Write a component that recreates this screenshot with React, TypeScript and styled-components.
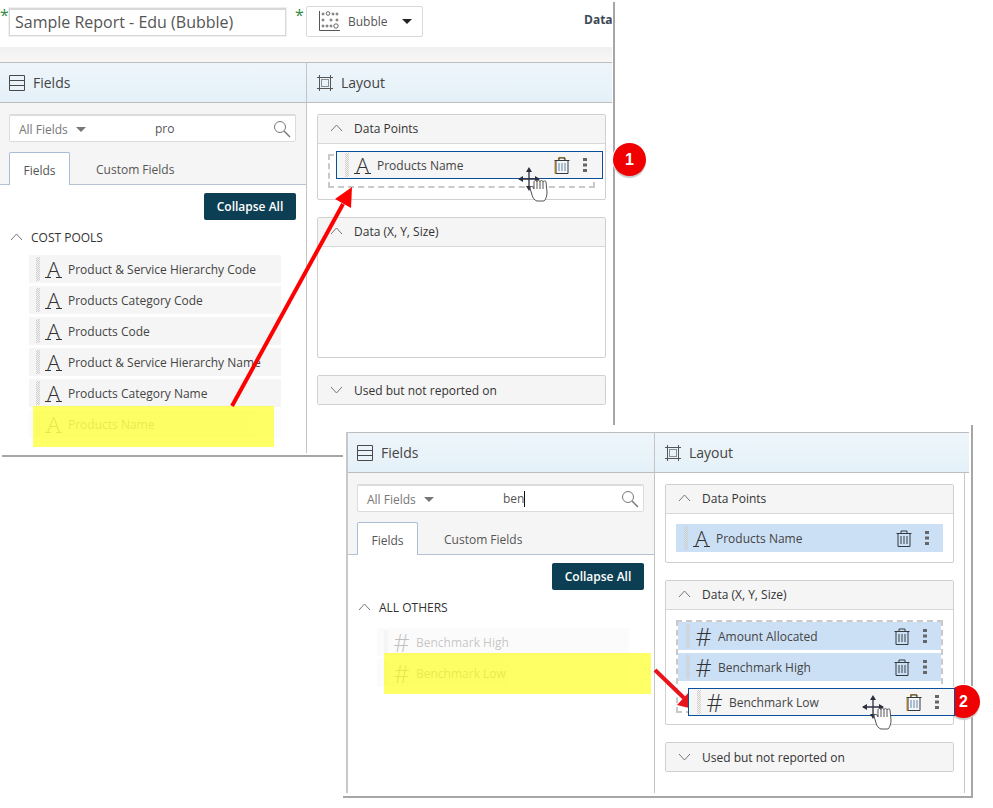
import * as React from 'react';
import styled, { createGlobalStyle } from 'styled-components';

const GlobalStyle = createGlobalStyle`
  html, body {
    margin: 0;
    padding: 0;
    background: #fff;
  }
  body {
    font-family: "Open Sans", "Liberation Sans", sans-serif;
    font-size: 12px;
    color: #444;
  }
  * {
    box-sizing: border-box;
  }
`;

const Canvas = styled.div`
  position: relative;
  width: 993px;
  height: 808px;
  overflow: hidden;
  background: #fff;
`;

const ReportWindow = styled.div`
  position: absolute;
  left: 0;
  top: 0;
  width: 615px;
  height: 458px;
  padding-right: 3px;
  background: #fff;
  &::before {
    content: '';
    position: absolute;
    right: 0;
    top: 2px;
    bottom: 0;
    width: 2px;
    background: #a6a6a6;
  }
  &::after {
    content: '';
    position: absolute;
    left: 2px;
    right: 0;
    bottom: 1px;
    height: 2px;
    background: #a6a6a6;
  }
`;

const SearchWindow = styled.div`
  position: absolute;
  left: 343px;
  top: 425px;
  width: 630px;
  height: 373px;
  padding: 7px 2px 2px 3px;
  background: #fff;
  border-right: 2px solid #a6a6a6;
  border-bottom: 2px solid #a6a6a6;
`;

const TopBar = styled.div`
  display: flex;
  align-items: flex-start;
  height: 47px;
  padding-top: 6px;
`;

const Star = styled.span<{ $w: number }>`
  width: ${p => p.$w}px;
  color: #2e8b3d;
  font-size: 16px;
  line-height: 18px;
`;

const TitleInput = styled.div`
  width: 277px;
  height: 28px;
  margin: 2px 9px 0 0;
  padding-left: 5px;
  border: 1px solid #d8d8d8;
  border-top-width: 2px;
  box-shadow: 0 0 0 1px #f0f0f0;
  color: #555;
  font-size: 16px;
  line-height: 24px;
  white-space: nowrap;
`;

const ChartSelect = styled.div`
  display: flex;
  align-items: center;
  width: 117px;
  height: 31px;
  padding-left: 12px;
  border: 1px solid #d9d9d9;
  border-radius: 2px;
  color: #555;
`;

const ChartLabel = styled.span`
  margin: 0 14px 0 8px;
  line-height: 28px;
`;

const Caret = styled.span<{ $color: string }>`
  width: 0;
  height: 0;
  border-left: 5px solid transparent;
  border-right: 5px solid transparent;
  border-top: 5px solid ${p => p.$color};
`;

const DataLabel = styled.div`
  margin-left: auto;
  width: 28px;
  overflow: hidden;
  color: #3d4a55;
  font-weight: 700;
  line-height: 28px;
`;

const Band = styled.div`
  height: 15px;
  background: linear-gradient(#f0f0f0, #f8f7f6);
`;

const Panes = styled.div<{ $h: number; $framed?: boolean }>`
  display: grid;
  grid-template-columns: 307px 1fr;
  height: ${p => p.$h}px;
  ${p => p.$framed && 'border-left: 2px solid #c8c8c8;'}
`;

const Pane = styled.div<{ $divider?: boolean }>`
  display: flex;
  flex-direction: column;
  min-width: 0;
  ${p => p.$divider && 'border-right: 1px solid #c4c4c4;'}
`;

const PaneHead = styled.div<{ $inset: number }>`
  display: flex;
  align-items: center;
  gap: 8px;
  height: 41px;
  flex: none;
  padding-left: ${p => p.$inset}px;
  border-top: 1px solid #bdbdbd;
  border-bottom: 1px solid #bdbdbd;
  background: linear-gradient(#eef6fb, #e4f0f8);
  color: #444;
  font-size: 14px;
  font-weight: 500;
`;

const SearchZone = styled.div`
  flex: none;
  height: 82px;
  padding: 11px 10px 0 9px;
  background: #f5f5f5;
`;

const SearchBox = styled.div`
  display: flex;
  align-items: center;
  height: 28px;
  padding: 1px 4px 0 9px;
  background: #fff;
  border: 1px solid #dcdcdc;
  border-top-width: 2px;
  border-radius: 2px;
  color: #555;
`;

const Scope = styled.div`
  display: flex;
  align-items: center;
  gap: 8px;
  width: 136px;
  color: #777;
`;

const SearchValue = styled.span<{ $caret?: boolean }>`
  height: 16px;
  line-height: 16px;
  ${p => p.$caret && 'border-right: 1px solid #111;'}
`;

const Magnifier = styled.svg`
  margin-left: auto;
`;

const Tabs = styled.div`
  display: flex;
  height: 33px;
  margin: 10px -10px 0 -9px;
  padding-left: 9px;
  border-bottom: 1px solid #b6c3d4;
`;

const Tab = styled.div<{ $active?: boolean }>`
  height: 33px;
  padding: 0 26px;
  line-height: 35px;
  color: #555;
  ${p => p.$active && `
    width: 61px;
    padding: 0;
    text-align: center;
    background: #fff;
    border: 1px solid #a9bdd6;
    border-bottom: 0;
    border-radius: 2px 2px 0 0;
  `}
`;

const PaneBody = styled.div`
  flex: 1;
  padding: 8px 10px 0 0;
  background: #fff;
`;

const CollapseButton = styled.div`
  width: 92px;
  height: 27px;
  margin-left: auto;
  background: #0d3f54;
  border-radius: 2px;
  color: #fff;
  font-weight: 600;
  line-height: 27px;
  text-align: center;
`;

const GroupTitle = styled.div`
  display: flex;
  align-items: center;
  gap: 8px;
  height: 18px;
  margin: 8px 0 0 10px;
  color: #333;
`;

const FieldList = styled.div<{ $top: number }>`
  display: flex;
  flex-direction: column;
  gap: 3px;
  margin: ${p => p.$top}px 0 0 29px;
  width: 252px;
`;

const FieldRow = styled.div<{ $faded?: boolean }>`
  display: flex;
  align-items: center;
  height: 28px;
  padding-left: 7px;
  background: #f5f5f5;
  color: #444;
  white-space: nowrap;
  ${p => p.$faded && 'opacity: 0.3;'}
`;

const Grip = styled.span`
  flex: none;
  width: 4px;
  height: 24px;
  background-image: conic-gradient(#cdcdcd 25%, transparent 0 50%, #cdcdcd 0 75%, transparent 0);
  background-size: 2px 2px;
`;

const TypeGlyph = styled.span<{ $serif: boolean }>`
  position: relative;
  flex: none;
  width: 17px;
  margin: 0 6px 0 5px;
  color: #333;
  font-size: ${p => (p.$serif ? 21 : 25)}px;
  font-weight: 300;
  line-height: 24px;
  text-align: center;
  ${p => p.$serif && `
    &::after {
      content: '';
      position: absolute;
      left: 0;
      right: 0;
      bottom: 3px;
      height: 1px;
      background: linear-gradient(to right, #333 0 6px, transparent 6px 11px, #333 11px);
    }
  `}
`;

const Section = styled.div<{ $h: number }>`
  width: 289px;
  height: ${p => p.$h}px;
  margin-bottom: 17px;
  background: #fff;
  border: 1px solid #d0d0d0;
  border-radius: 2px;
`;

const SectionHead = styled.div<{ $open: boolean }>`
  display: flex;
  align-items: center;
  gap: 11px;
  height: ${p => (p.$open ? 29 : 28)}px;
  padding-left: 12px;
  background: #f5f5f5;
  ${p => p.$open && 'padding-bottom: 2px; border-bottom: 1px solid #d8d8d8;'}
  color: #333;
`;

const SectionBody = styled.div`
  padding: 10px 10px 0;
`;

const LayoutBody = styled.div<{ $edge?: boolean }>`
  flex: 1;
  padding: 11px 0 0 10px;
  background: #fff;
  ${p => p.$edge && 'margin-right: 4px; border-right: 1px solid #c8c8c8;'}
`;

const DropZone = styled.div<{ $h: number }>`
  position: relative;
  display: flex;
  flex-direction: column;
  gap: 3px;
  height: ${p => p.$h}px;
  border: 2px dashed #c9c9c9;
`;

const Item = styled.div<{ $tone: 'picked' | 'zone' }>`
  display: flex;
  align-items: center;
  flex: none;
  height: 28px;
  background: #cce0f5;
  color: #444;
  ${p => (p.$tone === 'zone'
    ? 'padding: 0 14px 0 8px;'
    : 'padding: 0 14px 0 8px;')}
`;

const DragItem = styled.div<{ $left: number; $top: number }>`
  position: absolute;
  left: ${p => p.$left}px;
  top: ${p => p.$top}px;
  z-index: 2;
  display: flex;
  align-items: center;
  width: 267px;
  height: 28px;
  padding: 0 15px 0 8px;
  background: #f5f5f5;
  border: 1px solid #0a4f9a;
  color: #444;
`;

const Actions = styled.div`
  display: flex;
  align-items: center;
  gap: 13px;
  margin-left: auto;
`;

const Highlight = styled.div<{ $x: number; $y: number; $w: number; $h: number }>`
  position: absolute;
  left: ${p => p.$x}px;
  top: ${p => p.$y}px;
  width: ${p => p.$w}px;
  height: ${p => p.$h}px;
  background: rgba(255, 255, 0, 0.6);
`;

const Badge = styled.div<{ $x: number; $y: number }>`
  position: absolute;
  left: ${p => p.$x}px;
  top: ${p => p.$y}px;
  width: 33px;
  height: 33px;
  background: #f00000;
  border-radius: 50%;
  box-shadow: 0 2px 1px #c9c9c9, 0 0 0 1px #fff;
  color: #fff;
  font-family: "Liberation Sans", Arial, sans-serif;
  font-size: 16px;
  font-weight: 700;
  line-height: 33px;
  text-align: center;
`;

const Overlay = styled.svg`
  position: absolute;
  left: 0;
  top: 0;
  pointer-events: none;
`;

const CursorMark = styled.svg<{ $x: number; $y: number }>`
  position: absolute;
  left: ${p => p.$x}px;
  top: ${p => p.$y}px;
  z-index: 3;
`;

const Chevron: React.FC<{ down?: boolean }> = ({ down }) => (
  <svg width="13" height="8" viewBox="0 0 13 8">
    <path d={down ? 'M1 1l5.5 6L12 1' : 'M1 7l5.5-6L12 7'} fill="none" stroke="#777" />
  </svg>
);

const FieldsIcon = () => (
  <svg width="16" height="16" viewBox="0 0 16 16">
    <path d="M.5.500h15v15H.5zM.5 5.500h15M.5 10.500h15" fill="none" stroke="#4a4a4a" />
  </svg>
);

const LayoutIcon = () => (
  <svg width="16" height="16" viewBox="0 0 16 16">
    <path d="M2.500 0v16M13.500 0v16M0 2.500h16M0 13.500h16" fill="none" stroke="#555" />
    <rect x="4.500" y="4.500" width="7" height="7" fill="none" stroke="#8a8f94" />
  </svg>
);

const SearchIcon = () => (
  <Magnifier width="18" height="18" viewBox="0 0 18 18">
    <circle cx="7" cy="7" r="5.5" fill="none" stroke="#777" />
    <path d="M11 11l6 6" stroke="#777" strokeWidth="1.4" />
  </Magnifier>
);

const ChartIcon = () => (
  <svg width="21" height="21" viewBox="0 0 21 21">
    <path d="M.5 0v19.500H21" fill="none" stroke="#555" />
    <g fill="none" stroke="#555" strokeWidth=".9">
      <circle cx="4" cy="3" r="1" />
      <circle cx="9" cy="2.500" r="1.800" />
      <circle cx="14" cy="3" r="1" />
      <circle cx="18" cy="3" r="1" />
      <circle cx="4" cy="9" r="1" />
      <circle cx="12" cy="9" r="1" />
      <circle cx="18" cy="9" r="1" />
      <circle cx="4" cy="15" r="1" />
      <circle cx="8" cy="15" r="1" />
      <circle cx="12" cy="15" r="1" />
      <circle cx="17" cy="15" r="2.200" />
    </g>
  </svg>
);

const TrashIcon: React.FC<{ lifted?: boolean }> = ({ lifted }) => (
  <svg width="16" height="17" viewBox="0 0 16 17">
    {lifted && <path d="M1 4v13h13M4.500 3V.5h6V3" fill="none" stroke="#dc9a22" strokeWidth="1.200" />}
    <path d="M.5 3.500h15M5 3V1h6v2M2 3.500v13h12v-13" fill="none" stroke="#333a40" />
    <path d="M5 6v8M8 6v8M11 6v8" stroke={lifted ? '#5f88b0' : '#3b4046'} />
  </svg>
);

const DotsIcon = () => (
  <svg width="4" height="14" viewBox="0 0 4 14">
    <rect y="0" width="4" height="3" fill="#666" />
    <rect y="5.500" width="4" height="3" fill="#666" />
    <rect y="11" width="4" height="3" fill="#666" />
  </svg>
);

const MoveCursor = ({ x, y }: { x: number; y: number }) => (
  <CursorMark $x={x} $y={y} width="34" height="40" viewBox="0 0 34 40">
    <path d="M11 2v20M1 12h20" stroke="#2c3040" strokeWidth="1.300" />
    <path d="M11 0l3 5H8zM11 24l-3-5h6zM0 12l5-3v6zM22 12l-5-3v6z" fill="#2c3040" />
    <g transform="translate(1 -4)">
      <path
        d="M18 38c-3-1-4-3-5-6l-2-7c0-2 2-2 3-1l1 2v-7c0-2 3-2 3 0c0-2 3-2 3 0c0-2 3-2 3 0c0-1.500 3-1.500 3 0l1 10c0 4-1 7-3 9z"
        fill="#fff"
        stroke="#555"
      />
      <path d="M18 19v7M21 19v7M24 19v7" stroke="#555" />
    </g>
  </CursorMark>
);

type Kind = 'text' | 'number';

const FieldType: React.FC<{ kind: Kind }> = ({ kind }) => (
  <TypeGlyph $serif={kind === 'text'}>{kind === 'text' ? 'A' : '#'}</TypeGlyph>
);

const ItemContent: React.FC<{ kind: Kind; label: string; lifted?: boolean }> = ({ kind, label, lifted }) => (
  <>
    <Grip />
    <FieldType kind={kind} />
    <span>{label}</span>
    <Actions>
      <TrashIcon lifted={lifted} />
      <DotsIcon />
    </Actions>
  </>
);

const FieldsPane: React.FC<{
  search: string;
  caret?: boolean;
  group: string;
  listTop: number;
  fields: { label: string; kind: Kind; faded?: boolean }[];
}> = ({ search, caret, group, listTop, fields }) => (
  <Pane $divider>
    <PaneHead $inset={9}>
      <FieldsIcon />
      Fields
    </PaneHead>
    <SearchZone>
      <SearchBox>
        <Scope>
          All Fields
          <Caret $color="#777" />
        </Scope>
        <SearchValue $caret={caret}>{search}</SearchValue>
        <SearchIcon />
      </SearchBox>
      <Tabs>
        <Tab $active>Fields</Tab>
        <Tab>Custom Fields</Tab>
      </Tabs>
    </SearchZone>
    <PaneBody>
      <CollapseButton>Collapse All</CollapseButton>
      <GroupTitle>
        <Chevron />
        {group}
      </GroupTitle>
      <FieldList $top={listTop}>
        {fields.map(f => (
          <FieldRow key={f.label} $faded={f.faded}>
            <Grip />
            <FieldType kind={f.kind} />
            <span>{f.label}</span>
          </FieldRow>
        ))}
      </FieldList>
    </PaneBody>
  </Pane>
);

const LayoutHead = () => (
  <PaneHead $inset={10}>
    <LayoutIcon />
    Layout
  </PaneHead>
);

const costPools: { label: string; kind: Kind; faded?: boolean }[] = [
  { label: 'Product & Service Hierarchy Code', kind: 'text' },
  { label: 'Products Category Code', kind: 'text' },
  { label: 'Products Code', kind: 'text' },
  { label: 'Product & Service Hierarchy Name', kind: 'text' },
  { label: 'Products Category Name', kind: 'text' },
  { label: 'Products Name', kind: 'text', faded: true },
];

const allOthers: { label: string; kind: Kind; faded?: boolean }[] = [
  { label: 'Benchmark High', kind: 'number', faded: true },
  { label: 'Benchmark Low', kind: 'number', faded: true },
];

const App: React.FC = () => {
  return (
    <Canvas>
      <GlobalStyle />
      <ReportWindow>
        <TopBar>
          <Star $w={9}>*</Star>
          <TitleInput>Sample Report - Edu (Bubble)</TitleInput>
          <Star $w={11}>*</Star>
          <ChartSelect>
            <ChartIcon />
            <ChartLabel>Bubble</ChartLabel>
            <Caret $color="#222" />
          </ChartSelect>
          <DataLabel>Data</DataLabel>
        </TopBar>
        <Band />
        <Panes $h={391}>
          <FieldsPane search="pro" group="COST POOLS" listTop={9} fields={costPools} />
          <Pane>
            <LayoutHead />
            <LayoutBody>
              <Section $h={86}>
                <SectionHead $open>
                  <Chevron />
                  Data Points
                </SectionHead>
                <SectionBody>
                  <DropZone $h={34}>
                    <DragItem $left={6} $top={-5}>
                      <ItemContent kind="text" label="Products Name" lifted />
                    </DragItem>
                  </DropZone>
                </SectionBody>
              </Section>
              <Section $h={141}>
                <SectionHead $open>
                  <Chevron />
                  Data (X, Y, Size)
                </SectionHead>
              </Section>
              <Section $h={30}>
                <SectionHead $open={false}>
                  <Chevron down />
                  Used but not reported on
                </SectionHead>
              </Section>
            </LayoutBody>
          </Pane>
        </Panes>
      </ReportWindow>

      <SearchWindow>
        <Panes $h={361} $framed>
          <FieldsPane search="ben" caret group="ALL OTHERS" listTop={12} fields={allOthers} />
          <Pane>
            <LayoutHead />
            <LayoutBody $edge>
              <Section $h={79}>
                <SectionHead $open>
                  <Chevron />
                  Data Points
                </SectionHead>
                <SectionBody>
                  <Item $tone="picked">
                    <ItemContent kind="text" label="Products Name" />
                  </Item>
                </SectionBody>
              </Section>
              <Section $h={145}>
                <SectionHead $open>
                  <Chevron />
                  Data (X, Y, Size)
                </SectionHead>
                <SectionBody>
                  <DropZone $h={93}>
                    <Item $tone="zone">
                      <ItemContent kind="number" label="Amount Allocated" />
                    </Item>
                    <Item $tone="zone">
                      <ItemContent kind="number" label="Benchmark High" />
                    </Item>
                    <DragItem $left={10} $top={66}>
                      <ItemContent kind="number" label="Benchmark Low" lifted />
                    </DragItem>
                  </DropZone>
                </SectionBody>
              </Section>
              <Section $h={30}>
                <SectionHead $open={false}>
                  <Chevron down />
                  Used but not reported on
                </SectionHead>
              </Section>
            </LayoutBody>
          </Pane>
        </Panes>
      </SearchWindow>

      <Highlight $x={33} $y={406} $w={241} $h={41} />
      <Highlight $x={384} $y={653} $w={267} $h={41} />
      <MoveCursor x={518} y={167} />
      <MoveCursor x={862} y={695} />

      <Overlay width="993" height="808" viewBox="0 0 993 808">
        <path d="M232 406L343 204" stroke="#f00" strokeWidth="4" fill="none" />
        <polygon points="352,187 351,208 335,199" fill="#f00" />
        <path d="M655 670L684 698" stroke="#e8141c" strokeWidth="4" fill="none" />
        <polygon points="697,710 677,705 690,691" fill="#e8141c" />
      </Overlay>
      <Badge $x={613} $y={143}>1</Badge>
      <Badge $x={947} $y={685}>2</Badge>
    </Canvas>
  );
};

export default App;
